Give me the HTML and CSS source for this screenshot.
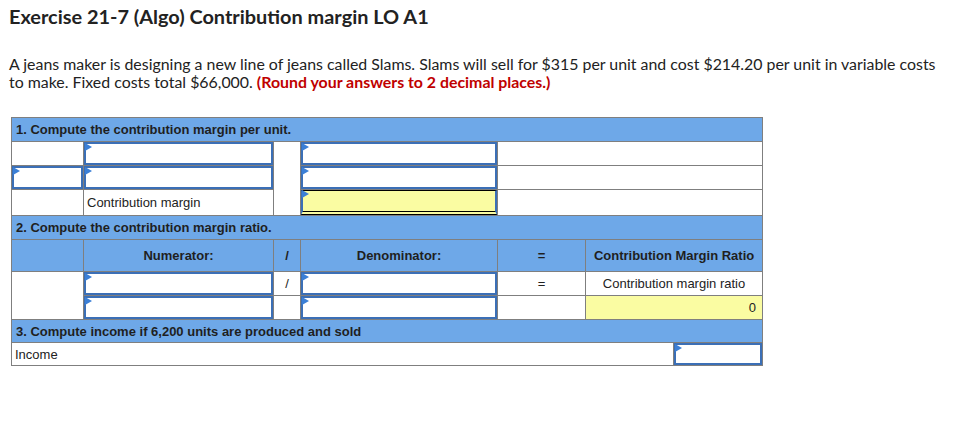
FILE: index.html
```html
<!DOCTYPE html>
<html>
<head>
<meta charset="utf-8">
<link rel="stylesheet" href="styles.css">
</head>
<body>
<h1 class="title">Exercise 21-7 (Algo) Contribution margin LO A1</h1>
<p class="prompt">A jeans maker is designing a new line of jeans called Slams. Slams will sell for $315 per unit and cost $214.20 per unit in variable costs to make. Fixed costs total $66,000. <strong class="note">(Round your answers to 2 decimal places.)</strong></p>

<table class="sheet">
  <colgroup>
    <col class="c1"><col class="c2"><col class="c3"><col class="c4"><col class="c5"><col class="c6"><col class="c7">
  </colgroup>
  <tr class="sec">
    <td colspan="7">1. Compute the contribution margin per unit.</td>
  </tr>
  <tr class="row">
    <td></td>
    <td class="inp"><div class="box"></div></td>
    <td rowspan="3"></td>
    <td class="inp"><div class="box"></div></td>
    <td colspan="3"></td>
  </tr>
  <tr class="row">
    <td class="inp"><div class="box"></div></td>
    <td class="inp"><div class="box"></div></td>
    <td class="inp"><div class="box"></div></td>
    <td colspan="3"></td>
  </tr>
  <tr class="row tall">
    <td></td>
    <td class="label">Contribution margin</td>
    <td class="inp"><div class="box total"></div></td>
    <td colspan="3"></td>
  </tr>
  <tr class="sec">
    <td colspan="7">2. Compute the contribution margin ratio.</td>
  </tr>
  <tr class="hdr">
    <td></td>
    <td>Numerator:</td>
    <td>/</td>
    <td>Denominator:</td>
    <td>=</td>
    <td colspan="2">Contribution Margin Ratio</td>
  </tr>
  <tr class="row">
    <td rowspan="2"></td>
    <td class="inp"><div class="box"></div></td>
    <td class="mid">/</td>
    <td class="inp"><div class="box"></div></td>
    <td class="mid">=</td>
    <td colspan="2" class="mid">Contribution margin ratio</td>
  </tr>
  <tr class="row">
    <td class="inp"><div class="box"></div></td>
    <td></td>
    <td class="inp"><div class="box"></div></td>
    <td></td>
    <td colspan="2" class="result">0</td>
  </tr>
  <tr class="sec short">
    <td colspan="7">3. Compute income if 6,200 units are produced and sold</td>
  </tr>
  <tr class="row short">
    <td colspan="6" class="label">Income</td>
    <td class="inp"><div class="box"></div></td>
  </tr>
</table>
</body>
</html>
```

FILE: styles.css
```css
html, body {
  margin: 0;
  padding: 0;
  background: #ffffff;
}
body {
  padding: 0 0 0 9px;
  color: #222222;
  font-family: Lato, "Open Sans", sans-serif;
}
.title {
  margin: 0;
  padding-top: 4px;
  font-size: 19.9px;
  line-height: 24px;
  font-weight: 700;
  color: #222222;
}
.prompt {
  margin: 27px 0 0 0;
  font-size: 15.9px;
  line-height: 18px;
  color: #222222;
  max-width: 945px;
}
.note {
  color: #c00000;
  font-weight: 700;
}
.sheet {
  margin: 26px 0 0 2px;
  border-collapse: collapse;
  table-layout: fixed;
  width: 751px;
  font-family: "Liberation Sans", Arial, sans-serif;
  font-size: 13px;
  color: #222222;
}
.c1 { width: 72px; }
.c2 { width: 190px; }
.c3 { width: 27px; }
.c4 { width: 197px; }
.c5 { width: 88px; }
.c6 { width: 88px; }
.c7 { width: 89px; }
.sheet td {
  border: 1px solid #7f7f7f;
  padding: 0;
  height: 23px;
  background: #ffffff;
}
.sec td {
  background: #6ea8e8;
  font-weight: 700;
  font-size: 13px;
  padding-left: 4px;
  height: 23px;
  color: #1f1f1f;
}
.hdr td {
  background: #6ea8e8;
  font-weight: 700;
  text-align: center;
  height: 31px;
  color: #1f1f1f;
}
.row.tall td { height: 25px; }
.sec.short td, .row.short td { height: 22px; }
.label {
  padding-left: 3px !important;
}
.mid {
  text-align: center;
}
.result {
  background: #fafca2 !important;
  text-align: right;
  padding-right: 6px !important;
}
.inp {
  vertical-align: top;
}
.box {
  position: relative;
  box-sizing: border-box;
  height: 23px;
  border: 2px solid #3b6fb6;
  background: #ffffff;
}
.row.tall .box { height: 25px; }
.row.short .box { height: 22px; }
.box::before {
  content: "";
  position: absolute;
  left: -1px;
  top: -1px;
  border-style: solid;
  border-width: 4px 0 4px 7px;
  border-color: transparent transparent transparent #3b7fd6;
}
.box.total {
  background: #fafca2;
  border-top: 1px solid #000000;
  border-bottom: 4px double #000000;
  border-left: 2px solid #3b6fb6;
  border-right: 2px solid #3b6fb6;
}
```
